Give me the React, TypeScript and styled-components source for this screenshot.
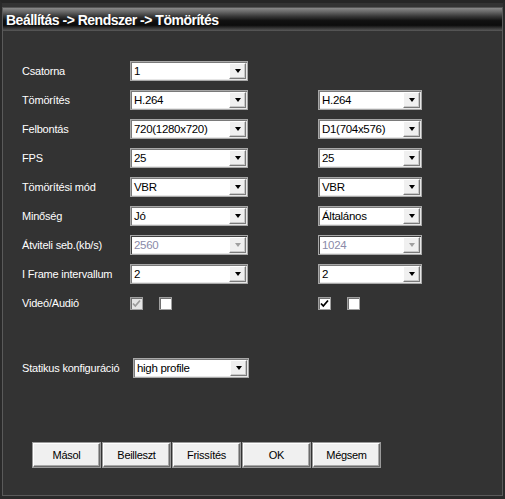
import React from "react";
import styled, { createGlobalStyle, css } from "styled-components";

const Global = createGlobalStyle`
  html, body { margin: 0; padding: 0; background: #333333; }
  body { width: 505px; height: 499px; overflow: hidden; font-family: "Liberation Sans", Arial, sans-serif; }
`;

const Window = styled.div`
  box-sizing: border-box;
  width: 505px;
  height: 499px;
  background: #333333;
  border-top: 3px solid #262626;
  border-left: 2px solid #2a2a2a;
  border-right: 2px solid #2a2a2a;
  border-bottom: 3px solid #2a2a2a;
  display: flex;
  flex-direction: column;
`;

const Frame = styled.div`
  flex: 1;
  display: flex;
  flex-direction: column;
  border-left: 1px solid #5a5a5a;
  border-right: 1px solid #5a5a5a;
  border-bottom: 1px solid #5a5a5a;
  margin-top: 4px;
  border-top: 1px solid #555;
`;

const TitleBar = styled.div`
  height: 23px;
  display: flex;
  align-items: center;
  padding-left: 3px;
  background: linear-gradient(
    to bottom,
    #8a8a8a 0%,
    #6a6a6a 15%,
    #3a3a3a 35%,
    #111111 55%,
    #0c0c0c 75%,
    #3c3c3c 90%,
    #5a5a5a 100%
  );
  color: #ffffff;
  font-weight: bold;
  font-size: 14px;
  letter-spacing: -0.5px;
`;

const Body = styled.div`
  flex: 1;
  display: flex;
  flex-direction: column;
  padding: 25px 0 0 19px;
  font-size: 11px;
  color: #ffffff;
  letter-spacing: -0.2px;
`;

const Grid = styled.div`
  display: grid;
  grid-template-columns: 108px 118px 70px 104px;
  grid-auto-rows: 29px;
  align-items: center;
`;

const Label = styled.div<{ $w?: number }>`
  color: #ffffff;
  white-space: nowrap;
  ${(p) => p.$w && css`width: ${p.$w}px;`}
`;

const SelectBox = styled.div<{ $disabled?: boolean; $w?: number }>`
  box-sizing: border-box;
  height: 20px;
  width: ${(p) => (p.$w ? `${p.$w}px` : "100%")};
  display: flex;
  align-items: center;
  background: #ffffff;
  border: 1px solid #a8a8a8;
  box-shadow: inset 1px 1px 0 #7a7a7a, inset -1px -1px 0 #e6e6e6;
  padding: 1px;
  ${(p) =>
    p.$disabled &&
    css`
      box-shadow: inset 1px 1px 0 #404040, inset -1px -1px 0 #e6e6e6;
    `}
`;

const SelectText = styled.div<{ $disabled?: boolean }>`
  flex: 1;
  padding-left: 2px;
  color: ${(p) => (p.$disabled ? "#8a8aa8" : "#000000")};
  font-size: 11.5px;
  letter-spacing: -0.3px;
  white-space: nowrap;
  overflow: hidden;
`;

const ArrowBtn = styled.div`
  box-sizing: border-box;
  width: 17px;
  height: 16px;
  background: #f0f0f0;
  border-top: 1px solid #ffffff;
  border-left: 1px solid #ffffff;
  border-right: 1px solid #7a7a7a;
  border-bottom: 1px solid #7a7a7a;
  box-shadow: inset -1px -1px 0 #c8c8c8;
  display: flex;
  align-items: center;
  justify-content: center;
`;

const Tri = styled.div<{ $disabled?: boolean }>`
  width: 0;
  height: 0;
  border-left: 3.5px solid transparent;
  border-right: 3.5px solid transparent;
  border-top: 4px solid ${(p) => (p.$disabled ? "#a0a0a0" : "#000000")};
`;

const Select: React.FC<{ value: string; disabled?: boolean; w?: number }> = ({ value, disabled, w }) => (
  <SelectBox $disabled={disabled} $w={w}>
    <SelectText $disabled={disabled}>{value}</SelectText>
    <ArrowBtn>
      <Tri $disabled={disabled} />
    </ArrowBtn>
  </SelectBox>
);

const Checks = styled.div`
  display: flex;
  align-items: center;
  gap: 16px;
`;

const CheckBox = styled.div<{ $disabled?: boolean }>`
  box-sizing: border-box;
  width: 13px;
  height: 13px;
  background: ${(p) => (p.$disabled ? "#e4e4e4" : "#ffffff")};
  border: 1px solid #a0a0a0;
  box-shadow: inset 1px 1px 0 #707070;
  display: flex;
  align-items: center;
  justify-content: center;
`;

const Check: React.FC<{ checked?: boolean; disabled?: boolean }> = ({ checked, disabled }) => (
  <CheckBox $disabled={disabled}>
    {checked && (
      <svg width="9" height="9" viewBox="0 0 9 9">
        <path d="M1 4.5 L3.3 7 L8 1.5" fill="none" stroke={disabled ? "#9a9a9a" : "#000"} strokeWidth="1.8" />
      </svg>
    )}
  </CheckBox>
);

const CheckRow = styled.div`
  margin-top: 2px;
`;

const StaticRow = styled.div`
  display: flex;
  align-items: center;
  margin-top: 41px;
  height: 20px;
`;

const ButtonBar = styled.div`
  display: flex;
  gap: 3px;
  margin-top: 65px;
  margin-left: 11px;
`;

const Button = styled.div`
  box-sizing: border-box;
  width: 67px;
  height: 24px;
  background: #f0f0f0;
  border-top: 1px solid #ffffff;
  border-left: 1px solid #ffffff;
  border-right: 1px solid #6a6a6a;
  border-bottom: 1px solid #6a6a6a;
  box-shadow: inset -1px -1px 0 #a8a8a8, 0 0 0 1px #9a9a9a;
  display: flex;
  align-items: center;
  justify-content: center;
  color: #000;
  font-size: 11px;
  letter-spacing: -0.3px;
`;

type Row = { label: string; left: string; right?: string; ld?: boolean; rd?: boolean };

const rows: Row[] = [
  { label: "Csatorna", left: "1" },
  { label: "Tömörítés", left: "H.264", right: "H.264" },
  { label: "Felbontás", left: "720(1280x720)", right: "D1(704x576)" },
  { label: "FPS", left: "25", right: "25" },
  { label: "Tömörítési mód", left: "VBR", right: "VBR" },
  { label: "Minőség", left: "Jó", right: "Általános" },
  { label: "Átviteli seb.(kb/s)", left: "2560", right: "1024", ld: true, rd: true },
  { label: "I Frame intervallum", left: "2", right: "2" },
];

export default function App() {
  return (
    <>
      <Global />
      <Window>
        <Frame>
          <TitleBar>Beállítás -&gt; Rendszer -&gt; Tömörítés</TitleBar>
          <Body>
            <Grid>
              {rows.map((r) => (
                <React.Fragment key={r.label}>
                  <Label>{r.label}</Label>
                  <Select value={r.left} disabled={r.ld} />
                  <div />
                  {r.right ? <Select value={r.right} disabled={r.rd} /> : <div />}
                </React.Fragment>
              ))}
              <Label>Videó/Audió</Label>
              <CheckRow>
                <Checks>
                  <Check checked disabled />
                  <Check />
                </Checks>
              </CheckRow>
              <div />
              <CheckRow>
                <Checks>
                  <Check checked />
                  <Check />
                </Checks>
              </CheckRow>
            </Grid>
            <StaticRow>
              <Label $w={111}>Statikus konfiguráció</Label>
              <Select value="high profile" w={116} />
            </StaticRow>
            <ButtonBar>
              <Button>Másol</Button>
              <Button>Beilleszt</Button>
              <Button>Frissítés</Button>
              <Button>OK</Button>
              <Button>Mégsem</Button>
            </ButtonBar>
          </Body>
        </Frame>
      </Window>
    </>
  );
}
